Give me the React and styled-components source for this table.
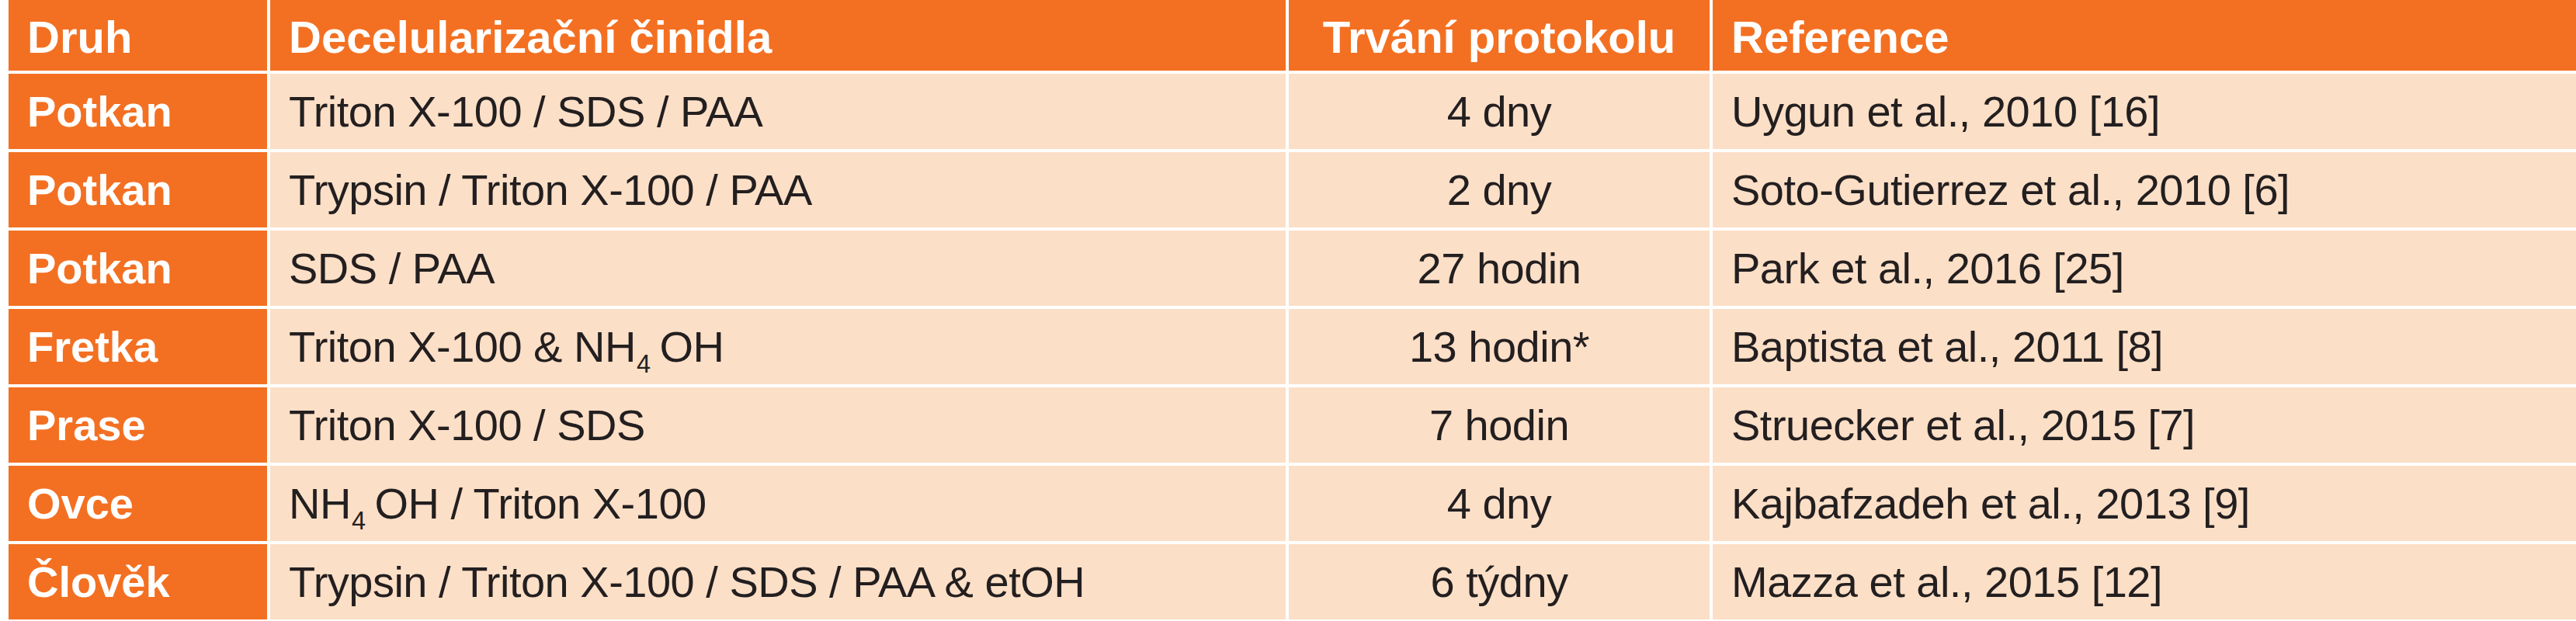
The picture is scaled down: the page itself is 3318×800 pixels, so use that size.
import React, { Fragment } from 'react';
import styled, { createGlobalStyle } from 'styled-components';

const GlobalStyle = createGlobalStyle`
  html, body {
    margin: 0;
    padding: 0;
    background: #ffffff;
  }

  body {
    font-family: "Liberation Sans", Arial, sans-serif;
  }
`;

const Table = styled.div`
  display: grid;
  grid-template-columns: 333px 1308px 542px 1fr;
  grid-template-rows: 91px repeat(7, 97px);
  column-gap: 4px;
  row-gap: 4px;
  width: 3318px;
  padding-left: 11px;
  box-sizing: border-box;
  background: #ffffff;
`;

const Cell = styled.div`
  display: flex;
  align-items: center;
  justify-content: ${({ $center }) => ($center ? 'center' : 'flex-start')};
  padding: 0 24px;
  background: ${({ $accent }) => ($accent ? '#f37022' : '#fcdfc7')};
  color: ${({ $accent }) => ($accent ? '#ffffff' : '#231f20')};
  font-size: 56px;
  font-weight: ${({ $bold }) => ($bold ? 700 : 400)};
  letter-spacing: ${({ $bold }) => ($bold ? '0px' : '-0.5px')};
  white-space: nowrap;
  line-height: 1;
`;

const HeadCell = styled(Cell)`
  font-size: 58px;
  padding-top: 4px;
`;

const Text = styled.span`
  display: inline-block;
  line-height: 1.1;
`;

const Sub = styled.span`
  display: inline-block;
  font-size: 58%;
  line-height: 1;
  transform: translateY(14px);
  margin: 0 12px 0 1px;
`;

const nh4 = (
  <>
    NH<Sub>4</Sub>OH
  </>
);

const rows = [
  { species: 'Potkan', agents: 'Triton X-100 / SDS / PAA', duration: '4 dny', ref: 'Uygun et al., 2010 [16]' },
  { species: 'Potkan', agents: 'Trypsin / Triton X-100 / PAA', duration: '2 dny', ref: 'Soto-Gutierrez et al., 2010 [6]' },
  { species: 'Potkan', agents: 'SDS / PAA', duration: '27 hodin', ref: 'Park et al., 2016 [25]' },
  { species: 'Fretka', agents: <>Triton X-100 &amp; {nh4}</>, duration: '13 hodin*', ref: 'Baptista et al., 2011 [8]' },
  { species: 'Prase', agents: 'Triton X-100 / SDS', duration: '7 hodin', ref: 'Struecker et al., 2015 [7]' },
  { species: 'Ovce', agents: <>{nh4} / Triton X-100</>, duration: '4 dny', ref: 'Kajbafzadeh et al., 2013 [9]' },
  { species: 'Člověk', agents: 'Trypsin / Triton X-100 / SDS / PAA & etOH', duration: '6 týdny', ref: 'Mazza et al., 2015 [12]' },
];

export default function App() {
  return (
    <>
      <GlobalStyle />
      <Table>
        <HeadCell $accent $bold><Text>Druh</Text></HeadCell>
        <HeadCell $accent $bold><Text>Decelularizační činidla</Text></HeadCell>
        <HeadCell $accent $bold $center><Text>Trvání protokolu</Text></HeadCell>
        <HeadCell $accent $bold><Text>Reference</Text></HeadCell>

        {rows.map((row, index) => (
          <Fragment key={index}>
            <Cell $accent $bold><Text>{row.species}</Text></Cell>
            <Cell><Text>{row.agents}</Text></Cell>
            <Cell $center><Text>{row.duration}</Text></Cell>
            <Cell><Text>{row.ref}</Text></Cell>
          </Fragment>
        ))}
      </Table>
    </>
  );
}
